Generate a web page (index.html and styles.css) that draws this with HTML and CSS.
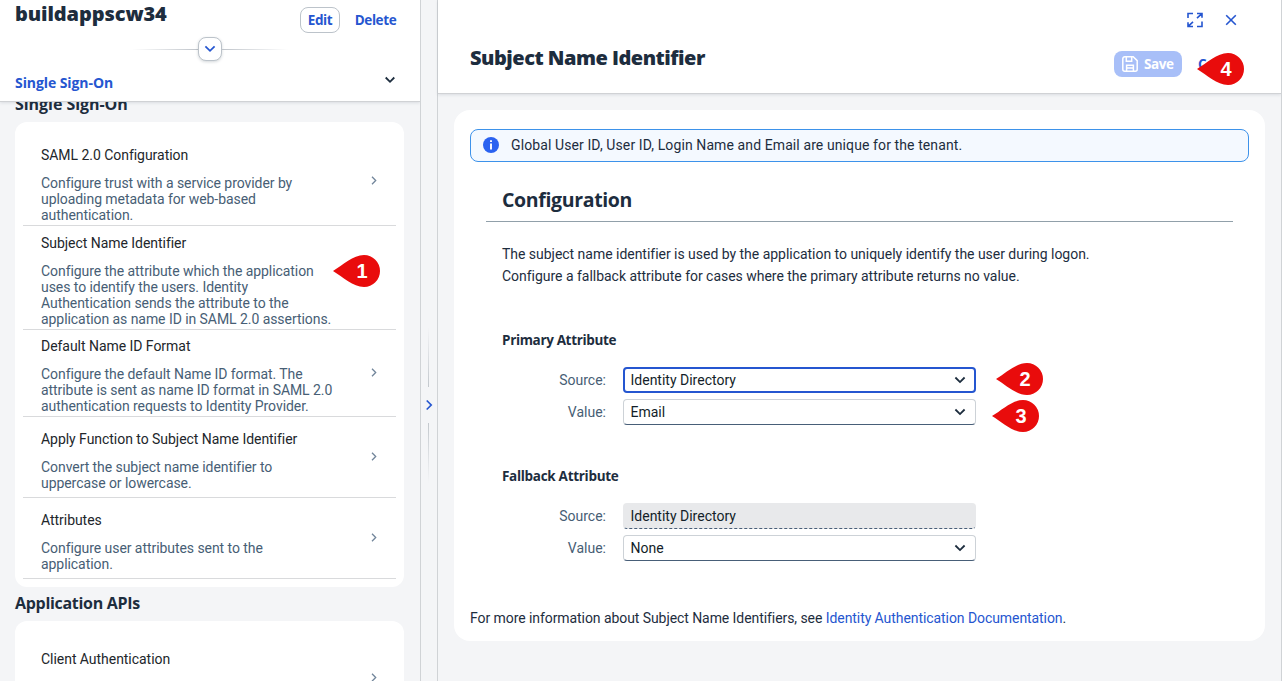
FILE: index.html
```html
<!DOCTYPE html>
<html lang="en">
<head>
<meta charset="utf-8">
<title>Subject Name Identifier</title>
<link rel="stylesheet" href="styles.css">
</head>
<body>
<div class="app">
  <aside class="side">
    <header class="side-head">
      <div class="side-top">
        <h1 class="app-name">buildappscw34</h1>
        <div class="actions"><button class="btn outlined">Edit</button><button class="btn plain">Delete</button></div>
      </div>
      <div class="collapse"><span class="fade left"></span><button class="collapse-btn" aria-label="Expand header"><svg width="12" height="8" viewBox="0 0 12 8"><path d="M1.4 1.3 6 5.9l4.6-4.6"/></svg></button><span class="fade right"></span></div>
      <div class="anchor"><span>Single Sign-On</span><svg width="12" height="8" viewBox="0 0 12 8"><path d="M1.7 1.5 6 5.8l4.3-4.3"/></svg></div>
    </header>
    <div class="side-body">
      <h2 class="group under">Single Sign-On</h2>
      <div class="card">
        <div class="item first"><div class="text"><div class="title">SAML 2.0 Configuration</div><p class="desc">Configure trust with a service provider by<br>uploading metadata for web-based<br>authentication.</p></div><svg class="nav" viewBox="0 0 6 9"><path d="m1 .8 3.7 3.7L1 8.2"/></svg></div>
        <div class="item second"><div class="text"><div class="title">Subject Name Identifier</div><p class="desc">Configure the attribute which the application<br>uses to identify the users. Identity<br>Authentication sends the attribute to the<br>application as name ID in SAML 2.0 assertions.</p></div><svg class="nav" viewBox="0 0 6 9"><path d="m1 .8 3.7 3.7L1 8.2"/></svg></div>
        <div class="item third"><div class="text"><div class="title">Default Name ID Format</div><p class="desc">Configure the default Name ID format. The<br>attribute is sent as name ID format in SAML 2.0<br>authentication requests to Identity Provider.</p></div><svg class="nav" viewBox="0 0 6 9"><path d="m1 .8 3.7 3.7L1 8.2"/></svg></div>
        <div class="item"><div class="text"><div class="title">Apply Function to Subject Name Identifier</div><p class="desc">Convert the subject name identifier to<br>uppercase or lowercase.</p></div><svg class="nav" viewBox="0 0 6 9"><path d="m1 .8 3.7 3.7L1 8.2"/></svg></div>
        <div class="item"><div class="text"><div class="title">Attributes</div><p class="desc">Configure user attributes sent to the<br>application.</p></div><svg class="nav" viewBox="0 0 6 9"><path d="m1 .8 3.7 3.7L1 8.2"/></svg></div>
      </div>
      <h2 class="group">Application APIs</h2>
      <div class="card">
        <div class="item single"><div class="text"><div class="title">Client Authentication</div></div><svg class="nav" viewBox="0 0 6 9"><path d="m1 .8 3.7 3.7L1 8.2"/></svg></div>
      </div>
    </div>
  </aside>
  <div class="splitter"><span class="rail up"></span><svg width="8" height="12" viewBox="0 0 8 12"><path d="M1.7 1.5 6.2 6l-4.5 4.5"/></svg><span class="rail down"></span></div>
  <main class="main">
    <header class="main-head">
      <div class="window-tools">
        <svg width="18" height="16" viewBox="0 0 18 16"><path d="M2 6V1.5h5M11 1.5h5v4.2M15.6 1.9l-4.6 4.3M7 14.5H2v-4.2M2.4 14.1 7 9.8M16 9.5v5h-5"/></svg>
        <svg width="12" height="12" viewBox="0 0 12 12"><path d="m1.2 1.2 9.6 9.6M10.8 1.2l-9.6 9.6"/></svg>
      </div>
      <div class="title-row">
        <h1 class="page-title">Subject Name Identifier</h1>
        <div class="main-actions">
          <button class="btn save"><svg width="16" height="16" viewBox="0 0 16 16"><path d="M2.8.8h8.4l4 3.8v8.6a2 2 0 0 1-2 2H2.8a2 2 0 0 1-2-2V2.8a2 2 0 0 1 2-2zM4.3 1v4.2h5.4V1M4.6 15V9.2h6.8V15M4.6 12h6.8"/></svg>Save</button>
          <button class="btn plain cancel">C</button>
        </div>
      </div>
    </header>
    <section class="panel">
      <div class="info"><svg width="16" height="16" viewBox="0 0 16 16"><circle cx="8" cy="8" r="8" fill="#2a62f0"/><path d="M8 6.6v6M8 3.2v1.9" stroke="#fff" stroke-width="1.9"/></svg><span>Global User ID, User ID, Login Name and Email are unique for the tenant.</span></div>
      <div class="config">
        <h2 class="config-title">Configuration</h2>
        <div class="config-body">
          <p class="lead">The subject name identifier is used by the application to uniquely identify the user during logon.<br>Configure a fallback attribute for cases where the primary attribute returns no value.</p>
          <h3 class="sub">Primary Attribute</h3>
          <div class="form">
            <label>Source:</label><div class="select focus"><span>Identity Directory</span><svg width="12" height="8" viewBox="0 0 12 8"><path d="M1.4 1.5 6 6.1l4.6-4.6"/></svg></div>
            <label>Value:</label><div class="select"><span>Email</span><svg width="12" height="8" viewBox="0 0 12 8"><path d="M1.4 1.5 6 6.1l4.6-4.6"/></svg></div>
          </div>
          <h3 class="sub fallback">Fallback Attribute</h3>
          <div class="form">
            <label>Source:</label><div class="select readonly"><span>Identity Directory</span></div>
            <label>Value:</label><div class="select"><span>None</span><svg width="12" height="8" viewBox="0 0 12 8"><path d="M1.4 1.5 6 6.1l4.6-4.6"/></svg></div>
          </div>
        </div>
      </div>
      <p class="more">For more information about Subject Name Identifiers, see <a>Identity Authentication Documentation</a>.</p>
    </section>
  </main>
  <div class="pin p1"><svg viewBox="0 0 47 32"><path d="M0 16C10 10 20 0 31 0a16 16 0 0 1 0 32C20 32 10 22 0 16z"/></svg><span>1</span></div>
  <div class="pin p2"><svg viewBox="0 0 47 32"><path d="M0 16C10 10 20 0 31 0a16 16 0 0 1 0 32C20 32 10 22 0 16z"/></svg><span>2</span></div>
  <div class="pin p3"><svg viewBox="0 0 47 32"><path d="M0 16C10 10 20 0 31 0a16 16 0 0 1 0 32C20 32 10 22 0 16z"/></svg><span>3</span></div>
  <div class="pin p4"><svg viewBox="0 0 47 32"><path d="M0 16C10 10 20 0 31 0a16 16 0 0 1 0 32C20 32 10 22 0 16z"/></svg><span>4</span></div>
</div>
</body>
</html>
```
FILE: styles.css
```css
* { box-sizing: border-box; }
body { margin: 0; overflow: hidden; background: #f4f5f7; color: #1d2d3e; font: 14px/16px Roboto, "Noto Sans", sans-serif; letter-spacing: 0; white-space: nowrap; }
h1, h2, h3, p { margin: 0; }
svg { display: block; fill: none; flex: none; }
button { font: inherit; letter-spacing: inherit; }
.app { position: relative; display: flex; width: 1282px; height: 681px; overflow: hidden; border-right: 1px solid #d0d3d6; }

.side { display: flex; flex-direction: column; width: 421px; height: 681px; border-right: 1px solid #d0d3d6; overflow: hidden; }
.side-head { position: relative; z-index: 1; flex: none; height: 102px; background: #fff; border-bottom: 1px solid #d0d2d5; box-shadow: 0 1px 3px #2235481f; }
.side-top { display: flex; justify-content: space-between; height: 36px; padding: 0 16px 0 15px; }
.app-name { font: 800 20px/28px "Open Sans", sans-serif; letter-spacing: -0.1px; }
.actions { display: flex; gap: 7px; padding-top: 7px; }
.btn { height: 26px; padding: 0 8px; border: 0; border-radius: 8px; background: none; font: 700 13.5px/24px "Open Sans", sans-serif; letter-spacing: -0.4px; color: #2556d0; }
.btn.outlined { width: 40px; padding: 0; border: 1px solid #bcc3ca; background: #fff; }
.btn.plain { width: 57px; padding: 0; }
.collapse { display: flex; align-items: center; justify-content: center; height: 26px; }
.fade { width: 66px; height: 1px; }
.fade.left { background: linear-gradient(to left, #bfc4ca, transparent); }
.fade.right { background: linear-gradient(to right, #bfc4ca, transparent); }
.collapse-btn { display: flex; align-items: center; justify-content: center; width: 24px; height: 24px; padding: 0; border: 1px solid #bcc3ca; border-radius: 8px; background: #fff; box-shadow: 0 1px 3px #22354833; }
.collapse-btn path { stroke: #2556d0; stroke-width: 1.7; }
.anchor { display: flex; justify-content: space-between; padding: 13px 24px 0 15px; font: 700 14px/16px "Open Sans", sans-serif; letter-spacing: -0.08px; color: #2556d0; }
.anchor svg { margin-top: 1px; }
.anchor path { stroke: #1d2d3e; stroke-width: 1.8; }
.side-body { padding: 0 16px 0 15px; }
.group { height: 34px; font: 700 16px/33px "Open Sans", sans-serif; letter-spacing: -0.3px; }
.group.under { height: 37px; margin-top: -17px; line-height: 39px; letter-spacing: -0.05px; }
.card { padding: 15px 8px 8px; border-radius: 12px; background: #fff; }
.item { display: flex; align-items: center; justify-content: space-between; height: 81px; padding: 14px 19px 6px 18px; border-bottom: 1px solid #d9dadc; }
.text { align-self: flex-start; }
.item.first { height: 89px; padding-top: 10px; }
.item.second { height: 104px; padding-top: 9px; }
.item.third { height: 87px; padding-top: 8px; }
.item .nav { margin-top: -9px; }
.item.first .nav, .item.second .nav { margin-top: -6px; }
.item.third .nav { margin-top: -4px; }
.item.single { padding-top: 15px; }
.item.single .nav { margin-top: -7px; }
.title { line-height: 16px; letter-spacing: -0.04px; color: #22262b; }
.desc { margin-top: 12px; line-height: 16px; letter-spacing: -0.06px; color: #475e75; }
.nav { width: 6px; height: 9px; }
.nav path { stroke: #71859a; stroke-width: 1.3; }

.splitter { display: flex; flex-direction: column; align-items: center; width: 17px; padding: 327px 1px 0 0; border-right: 1px solid #d0d3d6; }
.splitter svg { margin: 12px 0; }
.splitter path { stroke: #2556d0; stroke-width: 1.7; }
.rail { width: 1px; height: 60px; }
.rail.up { background: linear-gradient(transparent, #c3c8cd); }
.rail.down { background: linear-gradient(#c3c8cd, transparent); }

.main { flex: 1; }
.main-head { height: 94px; padding: 12px 16px 0 32px; background: #fff; border-bottom: 1px solid #d0d2d5; box-shadow: 0 1px 3px #2235481f; }
.window-tools { display: flex; align-items: center; justify-content: flex-end; gap: 21px; height: 16px; padding-right: 28px; }
.window-tools path { stroke: #2556d0; stroke-width: 1.6; }
.title-row { display: flex; justify-content: space-between; padding-top: 16px; }
.page-title { font: 800 20px/28px "Open Sans", sans-serif; letter-spacing: -0.5px; }
.main-actions { display: flex; gap: 8px; padding: 7px 12px 0 0; }
.btn.save { display: flex; align-items: center; gap: 6px; width: 68px; background: #a8bff8; color: #fff; }
.save path { stroke: #fff; stroke-width: 1.5; }
.btn.cancel { width: 63px; padding-left: 8px; text-align: left; }
.panel { height: 531px; margin: 16px 16px 0; padding: 19px 16px 0; border-radius: 16px; background: #fff; }
.info { display: flex; align-items: center; gap: 12px; height: 33px; padding: 0 0 1px 12px; border: 1px solid #3d92ea; border-radius: 8px; background: #f4f9ff; letter-spacing: 0.1px; }
.config { padding: 20px 16px 0; }
.config-title { height: 40px; padding-left: 16px; border-bottom: 1px solid #91a0aa; font: 700 19.5px/36px "Open Sans", sans-serif; letter-spacing: -0.35px; }
.config-body { padding: 21px 16px 0; }
.lead { line-height: 22px; letter-spacing: -0.025px; }
.sub { margin-top: 45px; font: 700 13.5px/16px "Open Sans", sans-serif; letter-spacing: -0.35px; }
.sub.fallback { margin-top: 43px; letter-spacing: -0.3px; }
.form { display: grid; grid-template-columns: 104px 353px; column-gap: 17px; row-gap: 6px; align-items: center; margin-top: 19px; }
.form label { text-align: right; color: #475e75; }
.select { display: flex; align-items: center; justify-content: space-between; height: 26px; padding: 0 9px 0 6.5px; border: 1px solid #cdd2d7; border-bottom-color: #485e78; border-radius: 4px; background: #fff; color: #131e29; }
.select path { stroke: #1d2d3e; stroke-width: 1.8; }
.select.focus { padding: 0 8px 0 5.5px; border: 2px solid #2556d0; }
.select.readonly { border-color: transparent; border-bottom: 1px dashed #485e78; background: #e8e9eb; }
.more { margin-top: 49px; letter-spacing: -0.07px; }
.more a { color: #2556d0; }

.pin { position: absolute; z-index: 2; width: 47px; height: 32px; }
.pin svg { width: 47px; height: 32px; fill: #e90c0c; }
.pin span { position: absolute; left: 19px; top: 0; width: 20px; text-align: center; font: bold 20px/32px "Liberation Sans", Arial, sans-serif; color: #fff; }
.p1 { left: 333px; top: 255px; }
.p2 { left: 996px; top: 363px; }
.p3 { left: 992px; top: 400px; }
.p4 { left: 1197px; top: 53px; }
```
